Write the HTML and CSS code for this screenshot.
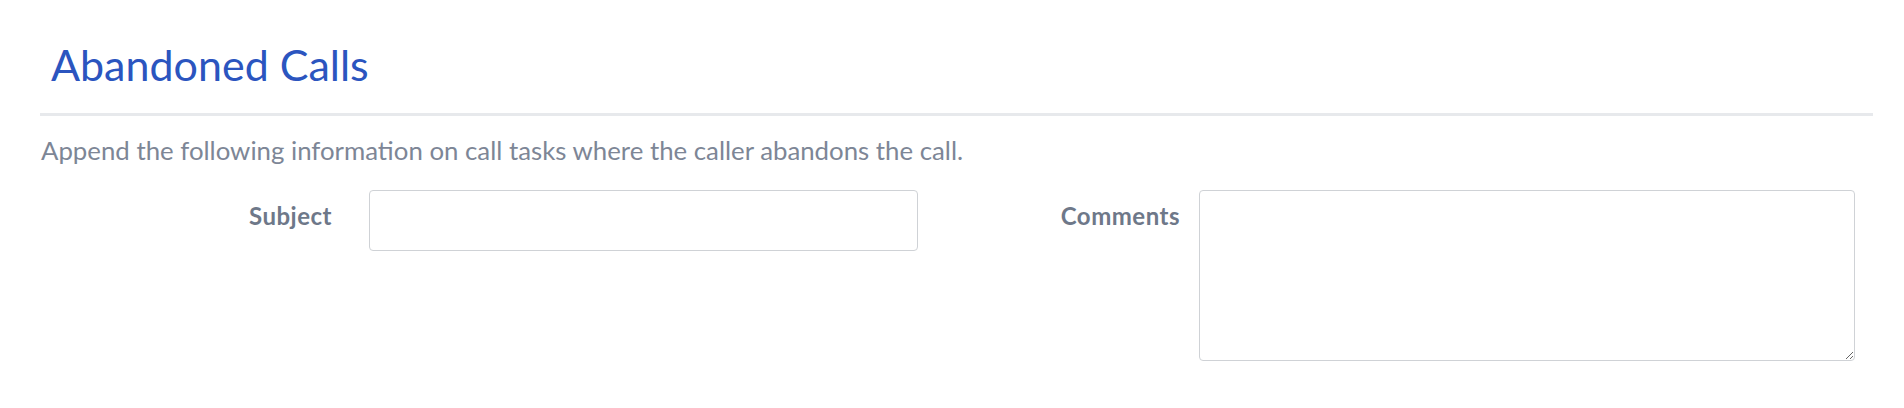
FILE: index.html
```html
<!DOCTYPE html>
<html lang="en">
<head>
<meta charset="utf-8">
<title>Abandoned Calls</title>
<link rel="stylesheet" href="styles.css">
</head>
<body>
<section class="panel">
  <h1 class="panel-title">Abandoned Calls</h1>
  <div class="divider"></div>
  <p class="panel-desc">Append the following information on call tasks where the caller abandons the call.</p>
  <div class="form-row">
    <div class="field field-subject">
      <label class="field-label label-subject" for="subject">Subject</label>
      <input class="field-input" id="subject" type="text">
    </div>
    <div class="field field-comments">
      <label class="field-label label-comments" for="comments">Comments</label>
      <textarea class="field-textarea" id="comments"></textarea>
    </div>
  </div>
</section>
</body>
</html>
```

FILE: styles.css
```css
* { box-sizing: border-box; }
html, body { margin: 0; padding: 0; background: #ffffff; }
body { font-family: Lato, "Open Sans", sans-serif; }

.panel {
  width: 1873px;
  padding: 40px 0 0 40px;
}

.panel-title {
  margin: 0;
  padding-left: 11px;
  font-size: 43px;
  line-height: 50px;
  font-weight: 400;
  color: #2b55bf;
}

.divider {
  margin-top: 23px;
  height: 3px;
  background: #e7e9ec;
}

.panel-desc {
  margin: 19px 0 0 1px;
  font-size: 25.8px;
  line-height: 31px;
  color: #7d8696;
}

.form-row {
  display: flex;
  margin-top: 24px;
}

.field {
  display: flex;
  align-items: flex-start;
}

.field-label {
  display: block;
  text-align: right;
  font-size: 24px;
  line-height: 28px;
  letter-spacing: 0.5px;
  font-weight: 700;
  color: #6e7889;
  padding-top: 12px;
}

.label-subject { width: 292px; margin-right: 37px; }
.label-comments { width: 262px; margin-right: 19px; }

.field-input,
.field-textarea {
  display: block;
  margin: 0;
  border: 1.5px solid #cfd2d6;
  border-radius: 4px;
  background: #fff;
  font-family: inherit;
  font-size: 20px;
  outline: none;
}

.field-input { width: 549px; height: 61px; }
.field-textarea { width: 656px; height: 171px; resize: both; }
```
